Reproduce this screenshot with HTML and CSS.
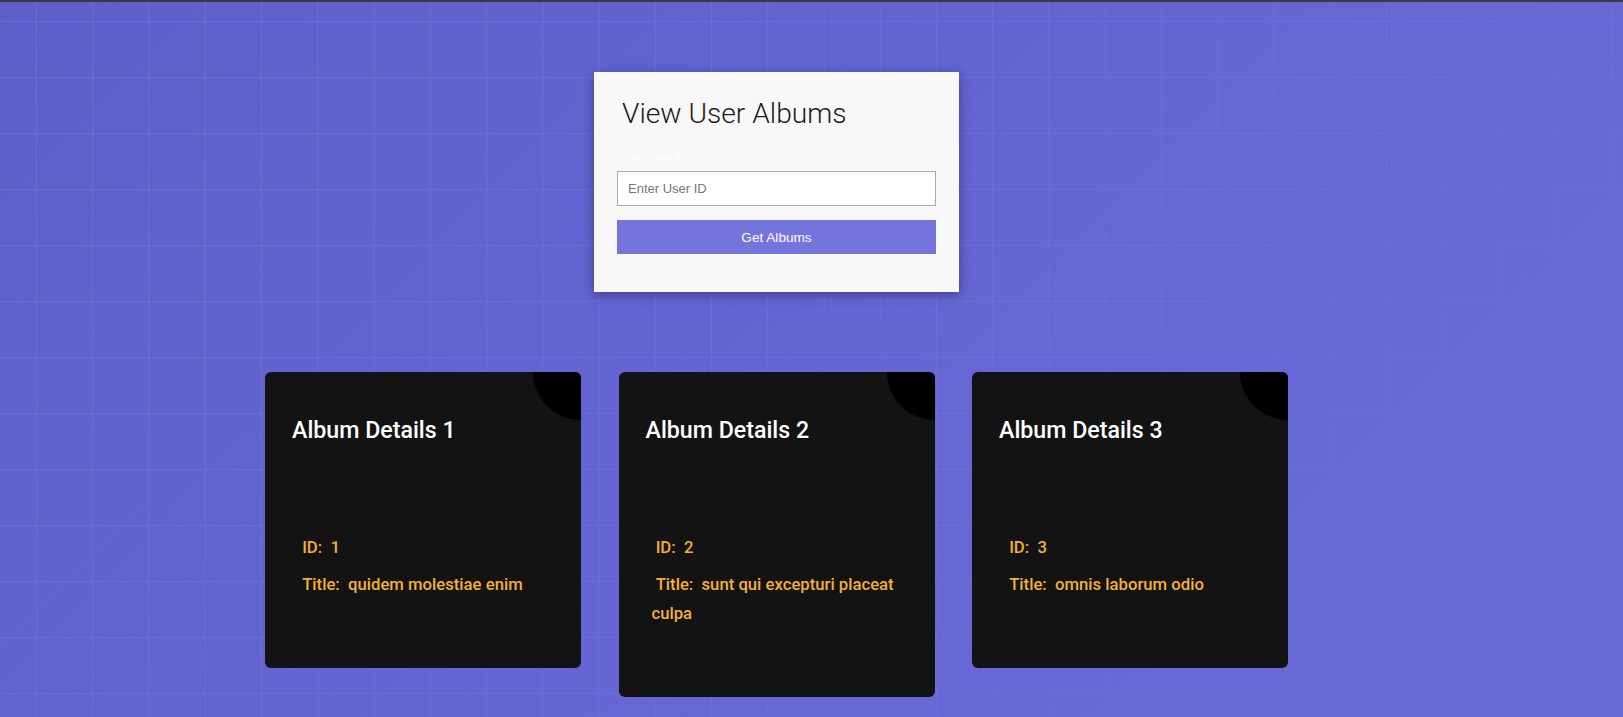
FILE: index.html
```html
<!DOCTYPE html>
<html lang="en">
<head>
<meta charset="utf-8">
<title>View User Albums</title>
<link rel="stylesheet" href="styles.css">
</head>
<body>
<div class="page">
  <div class="form-card">
    <h1 class="form-title">View User Albums</h1>
    <label class="form-label" for="uid">Enter User ID:</label>
    <input class="form-input" id="uid" type="text" placeholder="Enter User ID">
    <button class="form-button" type="button">Get Albums</button>
  </div>
  <div class="albums">
    <div class="album">
      <span class="album-corner"></span>
      <h2 class="album-title">Album Details 1</h2>
      <div class="album-details">
        <p class="album-line">&nbsp;ID:&nbsp; 1</p>
        <p class="album-line">&nbsp;Title:&nbsp; quidem molestiae enim</p>
      </div>
    </div>
    <div class="album">
      <span class="album-corner"></span>
      <h2 class="album-title">Album Details 2</h2>
      <div class="album-details">
        <p class="album-line">&nbsp;ID:&nbsp; 2</p>
        <p class="album-line">&nbsp;Title:&nbsp; sunt qui excepturi placeat culpa</p>
      </div>
    </div>
    <div class="album">
      <span class="album-corner"></span>
      <h2 class="album-title">Album Details 3</h2>
      <div class="album-details">
        <p class="album-line">&nbsp;ID:&nbsp; 3</p>
        <p class="album-line">&nbsp;Title:&nbsp; omnis laborum odio</p>
      </div>
    </div>
  </div>
</div>
</body>
</html>
```

FILE: styles.css
```css
html, body {
  margin: 0;
  padding: 0;
}

body {
  min-height: 717px;
  box-sizing: border-box;
  border-top: 2px solid #3b3b3f;
  font-family: "Liberation Sans", Arial, sans-serif;
  background-color: #5f5fcc;
  background-image:
    linear-gradient(135deg, rgba(95, 95, 204, 0) 0%, rgba(100, 100, 210, 0.35) 45%, rgba(106, 106, 216, 1) 100%),
    linear-gradient(to right, rgba(255, 255, 255, 0.09) 1px, transparent 1px),
    linear-gradient(to bottom, rgba(255, 255, 255, 0.09) 1px, transparent 1px),
    linear-gradient(135deg, #5e5ecb 0%, #6a6ad8 100%);
  background-size: 100% 100%, 56.25px 56px, 56.25px 56px, 100% 100%;
  background-position: 0 0, 36px 21px, 36px 21px, 0 0;
  background-repeat: no-repeat, repeat, repeat, no-repeat;
}

.page {
  width: 1553px;
  display: flex;
  flex-direction: column;
  align-items: center;
  padding-top: 70px;
  padding-bottom: 20px;
}

.form-card {
  width: 365px;
  box-sizing: border-box;
  background: #f8f8f8;
  padding: 25px 23px 38px;
  display: flex;
  flex-direction: column;
  box-shadow: 0 3px 10px rgba(20, 20, 60, 0.45);
}

.form-title {
  margin: 0;
  padding-left: 5px;
  font-family: Roboto, "Liberation Sans", sans-serif;
  font-weight: 300;
  font-size: 28.2px;
  line-height: 34px;
  color: #1c1c1c;
}

.form-label {
  margin-top: 20px;
  padding-left: 5px;
  font-size: 10.5px;
  line-height: 14px;
  color: #ffffff;
}

.form-input {
  margin: 6px 0 0;
  height: 35px;
  box-sizing: border-box;
  border: 1px solid #a9a9a9;
  background: #ffffff;
  padding: 0 10px;
  font-family: "Liberation Sans", Arial, sans-serif;
  font-size: 13px;
  color: #333;
  outline: none;
}

.form-input::placeholder {
  color: #767676;
}

.form-button {
  margin-top: 14px;
  height: 34px;
  border: none;
  background: #7573dc;
  color: #ffffff;
  font-family: "Liberation Sans", Arial, sans-serif;
  font-size: 13.6px;
  cursor: pointer;
}

.albums {
  margin-top: 80px;
  display: flex;
  align-items: flex-start;
  gap: 37.5px;
}

.album {
  position: relative;
  overflow: hidden;
  width: 316px;
  box-sizing: border-box;
  background: #131313;
  border-radius: 6px;
  padding: 0 27px 69px;
  font-family: Roboto, "Liberation Sans", sans-serif;
}

.album-corner {
  position: absolute;
  top: -48px;
  right: -48px;
  width: 96px;
  height: 96px;
  border-radius: 50%;
  background: #000000;
}

.album-title {
  margin: 45px 0 0;
  font-size: 23.2px;
  line-height: 27px;
  font-weight: 500;
  color: #ffffff;
}

.album-details {
  margin-top: 89px;
  padding-left: 6px;
}

.album-line {
  margin: 0 0 8px;
  font-size: 16.7px;
  line-height: 29px;
  font-weight: 500;
  color: #f4b02f;
}

.album-line:last-child {
  margin-bottom: 0;
}
```
